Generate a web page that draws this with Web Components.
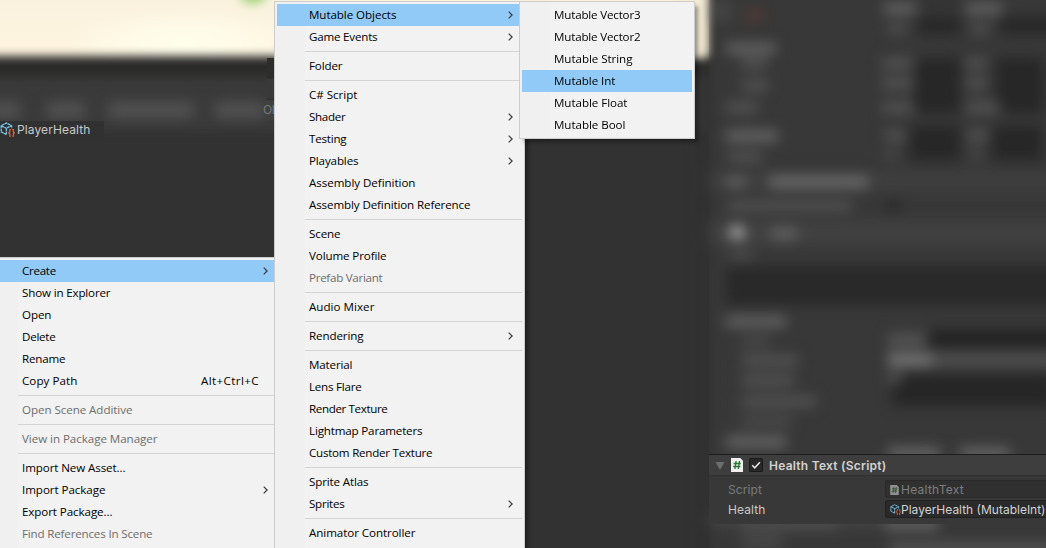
<!DOCTYPE html>
<html lang="en">
<head>
<meta charset="utf-8">
<title>Create menu</title>
<style>
html,body{margin:0;height:100%;overflow:hidden;background:#323232}
</style>
</head>
<body>
<editor-window></editor-window>
<script>
// Adjusts the tracking of a label so that it takes the given width.
function track(el, width) {
  const natural = el.getBoundingClientRect().width;
  el.style.letterSpacing = ((width - natural) / el.textContent.length).toFixed(3) + 'px';
}
function define(name, html, connected) {
  const t = document.createElement('template');
  t.innerHTML = html;
  customElements.define(name, class extends HTMLElement {
    connectedCallback() {
      if (this.shadowRoot) return;
      this.attachShadow({ mode: 'open' }).append(t.content.cloneNode(true));
      if (connected) connected.call(this, this.shadowRoot);
    }
  });
}

define('fit-text', `<style>:host{display:inline-block;white-space:pre}span{display:inline-block}</style><span></span>`, function (r) {
  const s = r.querySelector('span');
  s.textContent = this.getAttribute('text');
  track(s, +this.getAttribute('w'));
});

define('object-icon', `<style>:host{display:block;width:15px;height:15px}svg{display:block;width:100%;height:100%}</style>
<svg viewBox="0 0 15 15" fill="none"><path d="M6.4 12.6 1.2 9.8V3.6L6.4 1l5.2 2.6v2.6M1.4 3.8 6.4 6.3l5-2.5M6.4 6.3v6.2" stroke="#76c7ee" stroke-width="1.3" stroke-dasharray="2.8 .4"/><path d="M10.8 7.6h-1v2.3l-1.2 1 1.2 1v2.3h1M12.3 7.6h1v2.3l1.2 1-1.2 1v2.3h-1" stroke="#f0693f" stroke-width="1.15"/></svg>`);

define('script-icon', `<style>:host{display:block;width:12px;height:14px}svg{display:block;width:100%;height:100%}</style>
<svg viewBox="0 0 12 14"><path d="M0 0H9.3L12 2.7V14H0Z" fill="#f0f0f0"/><path d="M5.1 3 3.9 11M8.5 3 7.3 11M2.6 5.5h7.2M2.2 8.5h7.2" stroke="#287a32" stroke-width="1.35" fill="none"/></svg>`);

define('menu-item', `<style>
:host{display:flex;align-items:center;height:22px;box-sizing:border-box;padding-left:var(--indent,32px);color:#000}
:host([on]){background:#91c9f7}
:host([off]){color:#6d6d6d}
.label{flex:1}
.label,.key{padding-bottom:2px}
.key{display:none;margin-right:15px}
:host([key]) .key{display:block}
svg{display:none;width:5px;height:8px;margin:0 var(--arrow,9px) 1px 0}
:host([more]) svg{display:block}
</style><fit-text class="label"></fit-text><fit-text class="key" w="57.5"></fit-text>
<svg viewBox="0 0 5 8"><path d="M.7.6 4.1 4 .7 7.4" fill="none" stroke="#3c3c3c" stroke-width="1.25"/></svg>`, function (r) {
  const make = (sel, text, w) => {
    const f = document.createElement('fit-text');
    f.className = sel; f.setAttribute('text', text); f.setAttribute('w', w);
    r.querySelector('.' + sel).replaceWith(f);
  };
  make('label', this.getAttribute('text'), this.getAttribute('w') - .6);
  if (this.hasAttribute('key')) make('key', this.getAttribute('key'), 58);
});

define('menu-line', `<style>:host{display:block;height:7px;box-sizing:border-box;padding:3px 0 0 var(--line,28px)}i{display:block;height:1px;background:#d4d4d4}</style><i></i>`);

define('popup-menu', `<style>
:host{display:block;box-sizing:border-box;border:1px solid #ccc;padding:2px;font:11.6px/17px "Open Sans","Noto Sans",sans-serif;
background:linear-gradient(90deg,#f0f0f0 var(--gutter,30px),#f2f2f2 0);box-shadow:4px 4px 4px -1px rgba(0,0,0,.38)}
</style><slot></slot>`);

define('object-field', `<style>
:host{display:flex;align-items:center;gap:2px;box-sizing:border-box;height:18px;border:1px solid #212121;border-right:0;border-radius:3px 0 0 3px;background:#2a2a2a;padding-left:3px;color:#d2d2d2}
:host([off]){color:#7e7e7e;background:#303030;border-color:#292929}
:host([off]) ::slotted(script-icon){opacity:.5}
</style><slot></slot>`);

define('script-component', `<style>
:host{display:block;height:70px;background:#383838;font:12px/18px Inter,sans-serif;overflow:hidden}
header{display:flex;align-items:center;box-sizing:border-box;height:22px;border-top:1px solid #1d1d1d;border-bottom:1px solid #303030;background:#3e3e3e;padding-left:6px;color:#d2d2d2;font-weight:600}
header fit-text{padding-top:1px}
.tri{width:10px;height:8px;margin-top:1px}
script-icon{margin-left:6px}
.check{width:14px;height:14px;margin:0 6px;background:#282828;border-radius:2px;box-shadow:inset 0 0 0 1px #1a1a1a}
.rows{display:grid;grid-template-columns:157px 1fr;grid-auto-rows:18px;row-gap:2px;padding:4px 0 0 19px;color:#c8c8c8}
.rows fit-text{padding-top:1px}
.off{color:#7b7b7b}
object-field fit-text{margin-left:-1px}
object-field script-icon{width:9px;height:10px;margin:1px 1px 0 1px}
object-field object-icon{width:11px;height:11px;margin:0 -1px 0 1px}
</style>
<header><svg class="tri" viewBox="0 0 10 8"><path d="M.5 0h9L5 8Z" fill="#6c6c6c"/></svg><script-icon></script-icon>
<svg class="check" viewBox="0 0 14 14"><path d="m3.2 7.3 2.5 2.5 5.2-5.5" fill="none" stroke="#e8e8e8" stroke-width="1.5"/></svg>
<fit-text text="Health Text (Script)" w="117.5"></fit-text></header>
<div class="rows"><fit-text class="off" text="Script" w="34"></fit-text><object-field off><script-icon></script-icon><fit-text text="HealthText" w="63"></fit-text></object-field>
<fit-text text="Health" w="37.5"></fit-text><object-field><object-icon></object-icon><fit-text text="PlayerHealth (MutableInt)" w="144.5"></fit-text></object-field></div>`);

// Out-of-focus editor panels: a soft shape for each label and field.
define('editor-backdrop', `<style>:host{display:block}svg{display:block;width:1046px;height:548px}filter{color-interpolation-filters:sRGB}</style>
<svg viewBox="0 0 1046 548"><defs>
<filter id="a" filterUnits="userSpaceOnUse" x="-30" y="-30" width="1110" height="610"><feGaussianBlur stdDeviation="6.2"/></filter>
<filter id="b" filterUnits="userSpaceOnUse" x="-30" y="-30" width="1110" height="610"><feGaussianBlur stdDeviation="5"/></filter>
<linearGradient id="cream" gradientUnits="userSpaceOnUse" x1="0" y1="0" x2="0" y2="56"><stop offset="0" stop-color="#f9f1de"/><stop offset="1" stop-color="#fff5e0"/></linearGradient>
<radialGradient id="glow"><stop offset="0" stop-color="#ffffec"/><stop offset=".4" stop-color="#ffffec" stop-opacity=".7"/><stop offset="1" stop-color="#ffffec" stop-opacity="0"/></radialGradient></defs>
<rect width="1046" height="548" fill="#323232"/>
<g filter="url(#b)">
<rect x="-30" y="50" width="739" height="26" fill="#2a2a29"/>
<rect x="-30" y="77" width="739" height="54" fill="#3a3a3a"/>
<rect x="-30" y="-30" width="738" height="86" fill="url(#cream)"/>
<ellipse cx="185" cy="42" rx="120" ry="34" fill="url(#glow)"/>
<ellipse cx="253" cy="-4" rx="13" ry="8" fill="#a4d47e"/>
<rect x="-30" y="56" width="739" height="20" fill="#2a2a29"/>
</g>
<g class="left" filter="url(#a)" fill="#525252"></g>
<path d="M267 58h7v21h-7Z" fill="#2d2d2c"/><path d="M267 79h7v20h-7Z" fill="#393939"/><path d="M267 99h7v1h-7Z" fill="#2d2d2d"/><path d="M267 100h7v20h-7Z" fill="#404040"/>
<rect x="709" width="337" height="548" fill="#383838"/>
<g class="right" filter="url(#a)"></g>
<g filter="url(#b)"><path d="M680-30h28V57h-28Z" fill="#f4ebd4"/></g>
</svg>`, function (r) {
  const ns = 'http://www.w3.org/2000/svg';
  const add = (g, list) => list.forEach(([x, y, w, h, c, o]) => {
    const e = document.createElementNS(ns, 'rect');
    Object.entries({ x, y, width: w, height: h }).forEach(([k, v]) => e.setAttribute(k, v));
    if (c) e.setAttribute('fill', c);
    if (o) e.setAttribute('opacity', o);
    g.append(e);
  });
  add(r.querySelector('.left'), [[-10,102,30,16],[47,102,38,16],[108,102,86,16],[215,102,50,16]]);
  const T = '#636363', L = '#535353', D = '#272727', M = '#4b4b4b';
  add(r.querySelector('.right'), [
    [700,-20,9,600,'#303030'],[709,0,22,22,'#4a4a4a',.7],[746,8,16,14,'#6b3a32',.5],
    [726,43,50,11,T],[742,58,24,11,L],[742,80,26,11,L],[726,102,32,11,L],[726,130,52,12,T],[728,152,34,10,L],
    [920,0,40,8,'#303030'],[918,17,42,17,D],[1000,17,60,17,D],
    [884,3,32,11,T],[966,3,36,11,T],[888,24,18,9,L],[971,24,18,9,L],
    [914,58,46,55,D],[996,58,47,55,D],[910,126,50,34,D],[992,126,50,34,D],
    [882,58,32,11,L],[882,78,32,11,L],[882,102,32,11,L],[966,58,20,11,L],[966,78,20,11,L],[966,102,34,11,L],
    [885,130,20,11,L],[885,150,12,9,M],[968,130,20,11,L],[970,150,12,9,M],
    [709,172,360,18,'#3f3f3f'],[726,177,20,10,T],[769,176,99,12,'#6a6a6a'],
    [728,201,124,10,'#535353'],[887,200,12,11,'#262626'],
    [709,221,360,24,'#414141'],[730,226,14,13,'#a8a8a8'],[771,228,26,11,T],[730,250,23,10,M],
    [726,266,340,39,'#292929'],
    [726,316,60,11,T],[742,337,28,9,M],[742,355,56,11,L],[742,375,52,11,L],[742,396,74,11,L],[742,416,50,10,M],[726,436,60,12,T],
    [930,330,130,17,'#222'],[888,333,37,14,L],[888,352,180,15,'#4d4d4d'],[888,354,44,12,'#757575'],[892,374,160,32,'#262626'],[888,373,14,10,L],
    [888,448,52,11,'#6a6a6a'],[960,448,50,11,'#6a6a6a'],
    [709,516,180,9,'#4a4a4a'],[740,520,98,9,L],[742,536,40,11,M],[885,518,54,12,T],[890,543,180,12,'#555']
  ]);
});

define('project-asset', `<style>:host{display:flex;align-items:center;box-sizing:border-box;width:104px;height:19px;padding-bottom:1px;background:#313131;color:#c9c9c9;font:12px/18px Inter,sans-serif;gap:2px}object-icon{margin-top:-1px}</style><object-icon></object-icon><fit-text text="PlayerHealth" w="73.5"></fit-text>`);

define('editor-window', `<style>
:host{display:block;position:relative;width:1046px;height:548px;overflow:hidden}
editor-backdrop,project-asset,script-component,popup-menu,.crumb{position:absolute}
editor-backdrop{left:0;top:0}
project-asset{left:0;top:121px}
.crumb{left:263px;top:102px;font:12px/16px Inter,sans-serif;color:#777}
script-component{left:709px;top:454px;width:337px}
.context{left:-12px;top:257px;width:289px;height:310px;--indent:31px;--line:27px;--gutter:29px;--arrow:6px}
.create{left:274px;top:1px;width:251px;height:570px}
.objects{left:519px;top:1px;width:176px;height:138px}
</style>
<editor-backdrop></editor-backdrop>
<fit-text class="crumb" text="OI" w="11.5"></fit-text>
<project-asset></project-asset>
<script-component></script-component>
<popup-menu class="context">
<menu-item on more text="Create" w="34.5"></menu-item><menu-item text="Show in Explorer" w="89"></menu-item><menu-item text="Open" w="30"></menu-item><menu-item text="Delete" w="34"></menu-item><menu-item text="Rename" w="44"></menu-item><menu-item text="Copy Path" w="56" key="Alt+Ctrl+C"></menu-item>
<menu-line></menu-line><menu-item off text="Open Scene Additive" w="111"></menu-item><menu-line></menu-line><menu-item off text="View in Package Manager" w="136"></menu-item><menu-line></menu-line>
<menu-item text="Import New Asset..." w="104"></menu-item><menu-item more text="Import Package" w="84"></menu-item><menu-item text="Export Package..." w="91"></menu-item><menu-item off text="Find References In Scene" w="131"></menu-item>
</popup-menu>
<popup-menu class="create">
<menu-item on more text="Mutable Objects" w="88"></menu-item><menu-item more text="Game Events" w="69"></menu-item><menu-line></menu-line>
<menu-item text="Folder" w="34"></menu-item><menu-line></menu-line>
<menu-item text="C# Script" w="49"></menu-item><menu-item more text="Shader" w="37"></menu-item><menu-item more text="Testing" w="38"></menu-item><menu-item more text="Playables" w="50"></menu-item><menu-item text="Assembly Definition" w="107"></menu-item><menu-item text="Assembly Definition Reference" w="162"></menu-item><menu-line></menu-line>
<menu-item text="Scene" w="32"></menu-item><menu-item text="Volume Profile" w="78"></menu-item><menu-item off text="Prefab Variant" w="74"></menu-item><menu-line></menu-line>
<menu-item text="Audio Mixer" w="66"></menu-item><menu-line></menu-line><menu-item more text="Rendering" w="55"></menu-item><menu-line></menu-line>
<menu-item text="Material" w="44"></menu-item><menu-item text="Lens Flare" w="53"></menu-item><menu-item text="Render Texture" w="79"></menu-item><menu-item text="Lightmap Parameters" w="114"></menu-item><menu-item text="Custom Render Texture" w="124"></menu-item><menu-line></menu-line>
<menu-item text="Sprite Atlas" w="60"></menu-item><menu-item more text="Sprites" w="36"></menu-item><menu-line></menu-line><menu-item text="Animator Controller" w="107"></menu-item>
</popup-menu>
<popup-menu class="objects">
<menu-item text="Mutable Vector3" w="87"></menu-item><menu-item text="Mutable Vector2" w="87"></menu-item><menu-item text="Mutable String" w="79"></menu-item><menu-item on text="Mutable Int" w="62"></menu-item><menu-item text="Mutable Float" w="74"></menu-item><menu-item text="Mutable Bool" w="72"></menu-item>
</popup-menu>`);
</script>
</body>
</html>
